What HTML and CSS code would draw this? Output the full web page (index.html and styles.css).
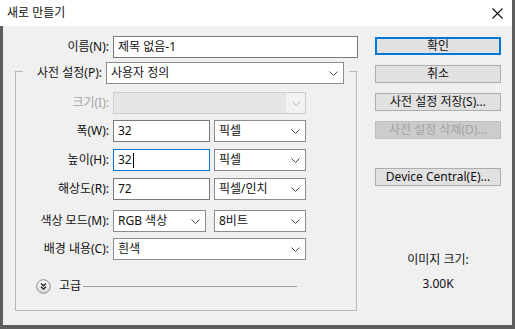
FILE: index.html
```html
<!DOCTYPE html>
<html lang="ko">
<head>
  <meta charset="UTF-8">
  <title>새로 만들기</title>
  <link rel="stylesheet" href="styles.css">
</head>
<body>
  <div class="window">
    <div class="titlebar">
      <span class="title">새로 만들기</span>
      <svg class="close" width="11" height="11" viewBox="0 0 11 11">
        <path d="M0.5 0.5 L10.5 10.5 M10.5 0.5 L0.5 10.5" stroke="#111" stroke-width="1.1" fill="none"/>
      </svg>
    </div>

    <div class="client">
      <div class="form">
        <div class="row row-name">
          <label class="label label-name">이름(N):</label>
          <div class="field input w-name">제목 없음-1</div>
        </div>

        <div class="group">
          <div class="group-head">
            <label class="label label-preset">사전 설정(P):</label>
            <div class="field select w-preset">
              <span class="value">사용자 정의</span>
              <svg class="chev" width="9" height="5" viewBox="0 0 9 5"><path d="M0.5 0.5 L4.5 4.5 L8.5 0.5" /></svg>
            </div>
          </div>

          <div class="row row-size">
            <label class="label disabled">크기(I):</label>
            <div class="field select disabled w-full">
              <span class="value"></span>
              <svg class="chev" width="9" height="5" viewBox="0 0 9 5"><path d="M0.5 0.5 L4.5 4.5 L8.5 0.5" /></svg>
            </div>
          </div>

          <div class="row row-width">
            <label class="label">폭(W):</label>
            <div class="field input w-num">32</div>
            <div class="field select w-unit">
              <span class="value">픽셀</span>
              <svg class="chev" width="9" height="5" viewBox="0 0 9 5"><path d="M0.5 0.5 L4.5 4.5 L8.5 0.5" /></svg>
            </div>
          </div>

          <div class="row row-height">
            <label class="label">높이(H):</label>
            <div class="field input focused w-num">32<span class="caret"></span></div>
            <div class="field select w-unit">
              <span class="value">픽셀</span>
              <svg class="chev" width="9" height="5" viewBox="0 0 9 5"><path d="M0.5 0.5 L4.5 4.5 L8.5 0.5" /></svg>
            </div>
          </div>

          <div class="row row-res">
            <label class="label">해상도(R):</label>
            <div class="field input w-num">72</div>
            <div class="field select w-unit">
              <span class="value">픽셀/인치</span>
              <svg class="chev" width="9" height="5" viewBox="0 0 9 5"><path d="M0.5 0.5 L4.5 4.5 L8.5 0.5" /></svg>
            </div>
          </div>

          <div class="row row-mode">
            <label class="label">색상 모드(M):</label>
            <div class="field select w-mode">
              <span class="value">RGB 색상</span>
              <svg class="chev" width="9" height="5" viewBox="0 0 9 5"><path d="M0.5 0.5 L4.5 4.5 L8.5 0.5" /></svg>
            </div>
            <div class="field select w-unit">
              <span class="value">8비트</span>
              <svg class="chev" width="9" height="5" viewBox="0 0 9 5"><path d="M0.5 0.5 L4.5 4.5 L8.5 0.5" /></svg>
            </div>
          </div>

          <div class="row row-bg">
            <label class="label">배경 내용(C):</label>
            <div class="field select w-full">
              <span class="value">흰색</span>
              <svg class="chev" width="9" height="5" viewBox="0 0 9 5"><path d="M0.5 0.5 L4.5 4.5 L8.5 0.5" /></svg>
            </div>
          </div>

          <div class="advanced">
            <svg class="adv-icon" width="15" height="15" viewBox="0 0 15 15">
              <defs>
                <linearGradient id="advFill" x1="0" y1="0" x2="0" y2="1">
                  <stop offset="0" stop-color="#ffffff"/>
                  <stop offset="1" stop-color="#d6d6d6"/>
                </linearGradient>
              </defs>
              <circle cx="7.5" cy="7.5" r="6.8" fill="url(#advFill)" stroke="#8a8a8a" stroke-width="1"/>
              <path d="M5 4.5 L7.5 6.8 L10 4.5 M5 7.8 L7.5 10.1 L10 7.8" stroke="#222" stroke-width="1.3" fill="none"/>
            </svg>
            <span class="adv-text">고급</span>
            <span class="adv-rule"></span>
          </div>
        </div>
      </div>

      <div class="side">
        <div class="btn default">확인</div>
        <div class="btn">취소</div>
        <div class="btn">사전 설정 저장(S)...</div>
        <div class="btn disabled">사전 설정 삭제(D)...</div>
        <div class="btn btn-device">Device Central(E)...</div>

        <div class="info">
          <div class="info-label">이미지 크기:</div>
          <div class="info-value">3.00K</div>
        </div>
      </div>
    </div>
  </div>
</body>
</html>
```

FILE: styles.css
```css
:root {
  --frame: #5e5e5e;
  --face: #f0f0f0;
  --text: #111111;
  --muted: #a3a3a3;
  --input-border: #7a7a7a;
  --select-border: #8c8c8c;
  --btn-face: #e1e1e1;
  --btn-border: #adadad;
  --accent: #0078d7;
}

* {
  box-sizing: border-box;
}

body {
  margin: 0;
  font-family: "Noto Sans", "Noto Sans CJK KR", sans-serif;
  font-size: 12px;
  color: var(--text);
}

.window {
  width: 515px;
  height: 329px;
  display: flex;
  flex-direction: column;
  background: var(--face);
  border-right: 3px solid var(--frame);
  border-bottom: 4px solid var(--frame);
}

.titlebar {
  height: 26px;
  flex: none;
  display: flex;
  align-items: center;
  justify-content: space-between;
  padding: 0 9px 0 7px;
  background: #ffffff;
}

.title {
  font-size: 12px;
  line-height: 16px;
}

.close {
  display: block;
}

.client {
  flex: 1;
  display: flex;
  border-left: 3px solid var(--frame);
}

/* left column */
.form {
  width: 355px;
  flex: none;
}

.row {
  display: flex;
  align-items: center;
  height: 22px;
}

.label {
  width: 93px;
  flex: none;
  margin-right: 4px;
  text-align: right;
  line-height: 22px;
  white-space: nowrap;
}

.label.disabled {
  color: var(--muted);
}

.row-name {
  margin-top: 10px;
}

.label-name {
  width: 106px;
}

.field {
  height: 22px;
  flex: none;
  display: flex;
  align-items: center;
  background: #ffffff;
  line-height: 20px;
  white-space: nowrap;
}

.input {
  border: 1px solid var(--input-border);
  padding-left: 4px;
}

.input.focused {
  border-color: var(--accent);
}

.caret {
  display: inline-block;
  width: 1px;
  height: 15px;
  margin-left: 1px;
  background: #000;
}

.select {
  border: 1px solid var(--select-border);
  padding: 0 5px 0 4px;
}

.select .value {
  flex: 1;
}

.chev {
  display: block;
  flex: none;
}

.chev path {
  fill: none;
  stroke: #444;
  stroke-width: 1;
}

.select.disabled {
  border-color: #cccccc;
  background: #f2f2f2;
  padding: 0 4px 0 0;
}

.select.disabled .value {
  align-self: stretch;
  margin-right: 6px;
  background: #e6e6e6;
}

.select.disabled .chev path {
  stroke: #b8b8b8;
}

.w-name { width: 245px; }
.w-preset { width: 238px; }
.w-full { width: 193px; }
.w-num { width: 97px; margin-right: 4px; }
.w-unit { width: 92px; }
.w-mode { width: 93px; margin-right: 8px; }

/* preset group box */
.group {
  margin: 13px 0 0 12px;
  width: 342px;
  border: 1px solid #b9b9b9;
  padding-bottom: 16px;
}

.group-head {
  display: flex;
  align-items: center;
  margin: -10px 7px 0 7px;
  padding-right: 5px;
  background: var(--face);
}

.label-preset {
  width: 79px;
}

.row-size { margin-top: 8px; }
.row-width { margin-top: 6px; }
.row-height { margin-top: 7px; }
.row-res { margin-top: 7px; }
.row-mode { margin-top: 10px; }
.row-bg { margin-top: 6px; }

.advanced {
  display: flex;
  align-items: center;
  height: 16px;
  margin-top: 18px;
  padding-left: 20px;
}

.adv-icon {
  display: block;
  flex: none;
}

.adv-text {
  margin-left: 8px;
  line-height: 16px;
}

.adv-rule {
  width: 214px;
  height: 1px;
  margin-left: 2px;
  background: #a0a0a0;
}

/* right column */
.side {
  width: 126px;
  margin-left: 17px;
  padding-top: 11px;
  display: flex;
  flex-direction: column;
}

.btn {
  height: 18px;
  margin-bottom: 10px;
  border: 1px solid var(--btn-border);
  background: var(--btn-face);
  text-align: center;
  line-height: 15px;
  white-space: nowrap;
}

.btn.default {
  border: 2px solid var(--accent);
  line-height: 13px;
}

.btn.disabled {
  background: #cccccc;
  border-color: #bfbfbf;
  color: var(--muted);
}

.btn.disabled + .btn {
  margin-top: 19px;
}

.info {
  margin-top: 56px;
  text-align: center;
  line-height: 16px;
}

.info-value {
  margin-top: 8px;
}
```
